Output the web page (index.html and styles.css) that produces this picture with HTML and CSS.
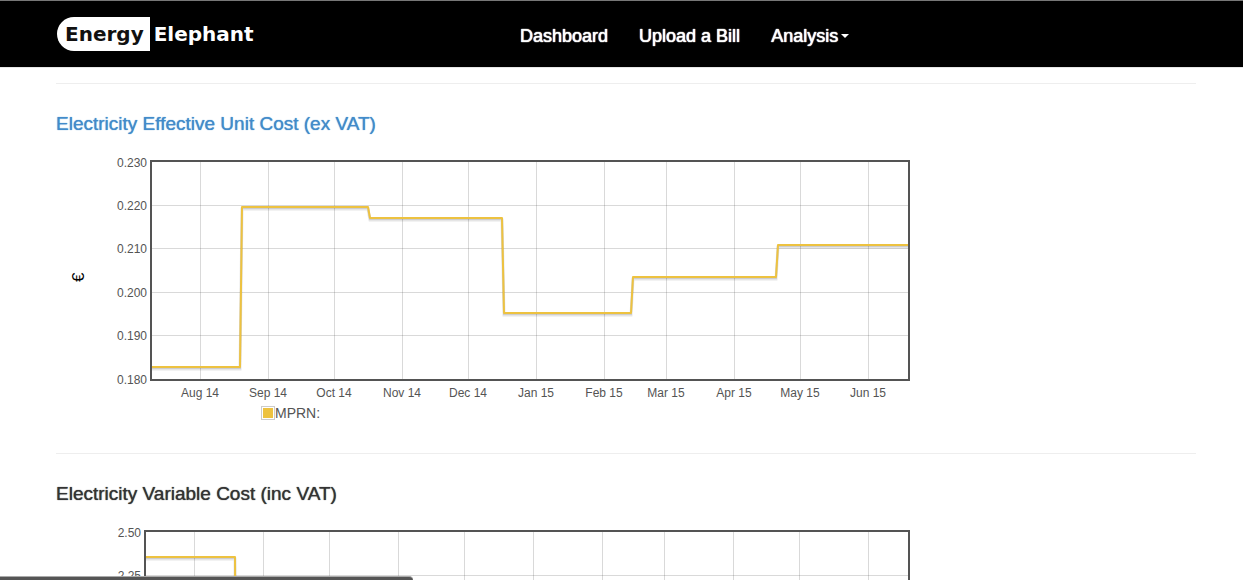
FILE: index.html
```html
<!DOCTYPE html>
<html lang="en">
<head>
    <meta charset="UTF-8">
    <meta name="viewport" content="width=device-width, initial-scale=1.0">
    <title>Energy Elephant</title>
    <link rel="stylesheet" href="styles.css">
</head>
<body>
    <header class="navbar">
        <a class="brand" href="#"><span class="brand-energy">Energy</span><span class="brand-elephant">Elephant</span></a>
        <nav class="menu">
            <a href="#">Dashboard</a>
            <a href="#">Upload a Bill</a>
            <button type="button" class="dropdown">Analysis<span class="caret"></span></button>
        </nav>
    </header>

    <main class="container">
        <section class="report">
            <h2><a href="#">Electricity Effective Unit Cost (ex VAT)</a></h2>
            <svg class="chart" viewBox="0 0 855 250">
                <text class="unit" transform="translate(28 132) rotate(-90)">€</text>
                <path class="grid" d="M144.500 12V229M212.500 12V229M278.500 12V229M346.500 12V229M412.500 12V229M480.500 12V229M548.500 12V229M610.500 12V229M678.500 12V229M744.500 12V229M812.500 12V229M96 55.500H852M96 98.500H852M96 142.500H852M96 185.500H852"/>
                <polyline class="shadow wide" points="96,219 184,219 186,59 312,59 314,70 446,70 448,165 575,165 577,129 720,129 722,97 852,97"/>
                <polyline class="shadow" points="96,218 184,218 186,58 312,58 314,69 446,69 448,164 575,164 577,128 720,128 722,96 852,96"/>
                <polyline class="series" points="96,217 184,217 186,57 312,57 314,68 446,68 448,163 575,163 577,127 720,127 722,95 852,95"/>
                <rect class="frame" x="95" y="11" width="758" height="219"/>
                <g class="y-labels">
                    <text x="91" y="17">0.230</text>
                    <text x="91" y="60">0.220</text>
                    <text x="91" y="103">0.210</text>
                    <text x="91" y="147">0.200</text>
                    <text x="91" y="190">0.190</text>
                    <text x="91" y="234">0.180</text>
                </g>
                <g class="x-labels">
                    <text x="144" y="247">Aug 14</text>
                    <text x="212" y="247">Sep 14</text>
                    <text x="278" y="247">Oct 14</text>
                    <text x="346" y="247">Nov 14</text>
                    <text x="412" y="247">Dec 14</text>
                    <text x="480" y="247">Jan 15</text>
                    <text x="548" y="247">Feb 15</text>
                    <text x="610" y="247">Mar 15</text>
                    <text x="678" y="247">Apr 15</text>
                    <text x="744" y="247">May 15</text>
                    <text x="812" y="247">Jun 15</text>
                </g>
            </svg>
            <div class="legend"><span class="swatch"></span>MPRN:</div>
        </section>

        <section class="report">
            <h2>Electricity Variable Cost (inc VAT)</h2>
            <svg class="chart" viewBox="0 0 855 250">
                <path class="grid" d="M138.500 12V229M207.500 12V229M273.500 12V229M342.500 12V229M408.500 12V229M477.500 12V229M546.500 12V229M608.500 12V229M677.500 12V229M743.500 12V229M812.500 12V229M90 55.500H852"/>
                <polyline class="shadow wide" points="90,39 179,39 180,229"/>
                <polyline class="shadow" points="90,38 179,38 180,229"/>
                <polyline class="series" points="90,37 179,37 180,229"/>
                <rect class="frame" x="89" y="11" width="764" height="219"/>
                <g class="y-labels">
                    <text x="85" y="17">2.50</text>
                    <text x="85" y="60">2.25</text>
                </g>
            </svg>
        </section>
    </main>

    <div class="status-bar"></div>
</body>
</html>
```
FILE: styles.css
```css
* {
    box-sizing: border-box;
}

body {
    margin: 0;
    height: 100vh;
    overflow: hidden;
    background: #fff;
    color: #333;
    font-family: "Helvetica Neue", "Liberation Sans", Arial, sans-serif;
    font-size: 14px;
    line-height: 20px;
}

.navbar {
    display: grid;
    grid-template-columns: 463px 1fr;
    align-items: center;
    height: 68px;
    padding: 0 47px 0 57px;
    background: #000;
    border-top: 1px solid #777;
    border-bottom: 1px solid #e7e7e7;
}

.brand {
    display: flex;
    align-items: center;
    font-family: "DejaVu Sans", sans-serif;
    font-size: 20px;
    font-weight: bold;
    line-height: 34px;
    text-decoration: none;
}

.brand-energy {
    padding: 0 6px 0 8px;
    background: #fff;
    border-radius: 17px 0 0 17px;
    color: #111;
}

.brand-elephant {
    padding-left: 4px;
    color: #fff;
}

.menu {
    display: flex;
    gap: 31px;
    padding-top: 4px;
}

.menu a,
.menu button {
    padding: 0;
    background: none;
    border: none;
    color: #fff;
    font-family: inherit;
    font-size: 18px;
    line-height: 20px;
    text-decoration: none;
    text-shadow: 0 0 1px #fff, 0 0 1px #fff;
    cursor: pointer;
}

.dropdown {
    display: flex;
    align-items: center;
    gap: 3px;
}

.caret {
    border-top: 4px solid #fff;
    border-left: 4px solid transparent;
    border-right: 4px solid transparent;
}

.container {
    padding: 15px 47px 0 56px;
}

.report {
    padding: 30px 0;
    border-top: 1px solid #eee;
}

.report h2 {
    margin: 0 0 16px;
    font-size: 19px;
    font-weight: normal;
    line-height: 20px;
    text-shadow: 0 0 1px currentColor;
}

.report h2 a {
    color: #428bca;
    text-decoration: none;
}

/* charts */
.chart {
    display: block;
    width: 75%;
    height: auto;
}

.chart text {
    fill: #545454;
    font-size: 12px;
}

.chart .unit {
    fill: #000;
    font-size: 17px;
}

.y-labels {
    text-anchor: end;
}

.x-labels {
    text-anchor: middle;
}

.grid {
    stroke: rgba(84, 84, 84, 0.22);
    stroke-width: 1px;
}

.frame {
    fill: none;
    stroke: #545454;
    stroke-width: 2px;
}

.series {
    fill: none;
    stroke: #edc240;
    stroke-width: 2px;
    stroke-linejoin: round;
}

.shadow {
    fill: none;
    stroke: rgba(0, 0, 0, 0.1);
    stroke-width: 2px;
}

.shadow.wide {
    stroke-width: 3px;
}

.legend {
    display: flex;
    align-items: center;
    margin-top: 3px;
    padding-left: 205px;
    color: #545454;
}

.swatch {
    width: 14px;
    height: 14px;
    padding: 1px;
    background: #edc240 content-box;
    border: 1px solid #ccc;
}

/* browser status strip along the bottom edge */
.status-bar {
    position: fixed;
    left: 0;
    bottom: 0;
    width: 413px;
    height: 4px;
    background: #555;
    border-top: 1px solid #aaa;
    border-radius: 0 4px 0 0;
}
```
